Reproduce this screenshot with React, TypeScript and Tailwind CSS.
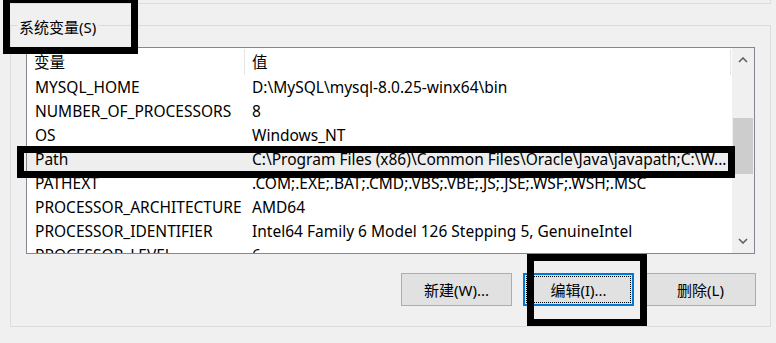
import React from "react";

const FONT = "font-['Noto_Sans','Noto_Sans_CJK_SC',sans-serif]";

const rows: [string, string][] = [
  ["MYSQL_HOME", "D:\\MySQL\\mysql-8.0.25-winx64\\bin"],
  ["NUMBER_OF_PROCESSORS", "8"],
  ["OS", "Windows_NT"],
  ["Path", "C:\\Program Files (x86)\\Common Files\\Oracle\\Java\\javapath;C:\\W..."],
  ["PATHEXT", ".COM;.EXE;.BAT;.CMD;.VBS;.VBE;.JS;.JSE;.WSF;.WSH;.MSC"],
  ["PROCESSOR_ARCHITECTURE", "AMD64"],
  ["PROCESSOR_IDENTIFIER", "Intel64 Family 6 Model 126 Stepping 5, GenuineIntel"],
  ["PROCESSOR_LEVEL", "6"],
];

function Chevron({ up }: { up?: boolean }) {
  return (
    <svg width="10" height="6" viewBox="0 0 10 6">
      <polyline
        points={up ? "1,5 5,1 9,5" : "1,1 5,5 9,1"}
        fill="none"
        stroke="#606060"
        strokeWidth="1.6"
      />
    </svg>
  );
}

export default function App() {
  return (
    <div className={`relative w-[776px] h-[343px] overflow-hidden bg-[#f0f0f0] text-[15.5px] leading-[20px] text-black ${FONT}`}>
      {/* previous group box remnant */}
      <div className="ml-[10px] w-[761px] h-[4px] border-r border-b border-[#dcdcdc]" />

      {/* group box */}
      <div className="relative mt-[21px] ml-[10px] w-[761px] h-[302px] border border-[#dcdcdc]">
        <div className="absolute top-[-10px] left-[6px] px-[2px] bg-[#f0f0f0] leading-[22px] text-[15px]">
          系统变量(S)
        </div>

        {/* list view */}
        <div className="mt-[21px] ml-[15px] w-[729px] h-[207px] border border-[#828790] bg-white flex overflow-hidden">
          <div className="w-[705px] flex flex-col overflow-hidden">
            <div className="flex h-[27px] shrink-0">
              <div className="w-[218px] pl-[7px] flex items-center border-r border-[#e5e5e5] mt-[1px]">变量</div>
              <div className="flex-1 pl-[7px] flex items-center border-r border-[#e5e5e5] mt-[1px]">值</div>
            </div>
            {rows.map(([k, v]) => (
              <div
                key={k}
                className={`flex h-[24px] shrink-0 items-center whitespace-nowrap ${k === "Path" ? "bg-[#eeeeee]" : ""}`}
              >
                <div className="w-[218px] pl-[8px]">{k}</div>
                <div className="flex-1 pl-[7px] overflow-hidden">{v}</div>
              </div>
            ))}
          </div>
          {/* scrollbar */}
          <div className="w-[22px] h-full bg-[#f0f0f0] flex flex-col ml-[1px]">
            <div className="h-[24px] flex items-center justify-center">
              <Chevron up />
            </div>
            <div className="flex-1 px-[1px]">
              <div className="mt-[46px] h-[56px] bg-[#cdcdcd]" />
            </div>
            <div className="h-[24px] flex items-center justify-center">
              <Chevron />
            </div>
          </div>
        </div>

        {/* buttons */}
        <div className="mt-[19px] mr-[14px] flex justify-end gap-[11px] text-[15px]">
          <div className="w-[111px] h-[33px] flex items-center justify-center bg-[#e1e1e1] border border-[#adadad]">
            新建(W)...
          </div>
          <div className="w-[111px] h-[33px] p-[1px] bg-[#e1e1e1] border-2 border-[#0078d7]">
            <div className="w-full h-full flex items-center justify-center border border-dotted border-black">
              编辑(I)...
            </div>
          </div>
          <div className="w-[111px] h-[33px] flex items-center justify-center bg-[#e1e1e1] border border-[#adadad]">
            删除(L)
          </div>
        </div>
      </div>

      {/* annotation boxes */}
      <div className="absolute left-[3px] top-[-4px] w-[135px] h-[58px] border-[7px] border-black" />
      <div className="absolute left-[17px] top-[146px] w-[718px] h-[32px] border-[7px] border-black" />
      <div className="absolute left-[527px] top-[254px] w-[120px] h-[72px] border-[7px] border-black" />
    </div>
  );
}
